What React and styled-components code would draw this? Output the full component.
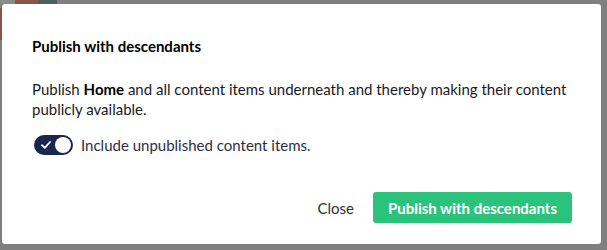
import React, { useState } from "react";
import styled, { createGlobalStyle } from "styled-components";

const GlobalStyle = createGlobalStyle`
  html, body {
    margin: 0;
    padding: 0;
    width: 607px;
    height: 250px;
    overflow: hidden;
    font-family: Lato, "Open Sans", sans-serif;
  }
`;

const Backdrop = styled.div`
  width: 607px;
  height: 250px;
  box-sizing: border-box;
  padding: 4px 6px 6px 2px;
  background:
    linear-gradient(to right, #8a8a8a 0 15px, #8a5548 15px 38px, #4e5f60 38px 57px, transparent 57px) top left / 100% 4px no-repeat,
    linear-gradient(to bottom, transparent 0 8px, #8a5548 8px 40px, transparent 40px) top left / 2px 100% no-repeat,
    #7f7f7f;
`;

const Dialog = styled.div`
  width: 599px;
  height: 240px;
  box-sizing: border-box;
  background: #fff;
  border-radius: 3px;
  padding: 32px 29px 21px 30px;
  display: flex;
  flex-direction: column;
  color: #1a1a1f;
`;

const Title = styled.h2`
  margin: 0;
  font-size: 15px;
  line-height: 20px;
  font-weight: 700;
  color: #000;
`;

const Body = styled.p`
  margin: 23px 0 0;
  font-size: 15px;
  line-height: 20px;
  strong {
    font-weight: 700;
    color: #000;
  }
`;

const ToggleRow = styled.label`
  display: flex;
  align-items: center;
  gap: 8px;
  margin-top: 16px;
  font-size: 15px;
  line-height: 20px;
  color: #2b2f45;
  cursor: pointer;
`;

const Track = styled.span`
  position: relative;
  width: 39px;
  height: 20px;
  border-radius: 10px;
  background: ${(p) => (p.$on ? "#1b264f" : "#d8d7d9")};
  flex-shrink: 0;
  margin-left: 2px;
`;

const Knob = styled.span`
  position: absolute;
  top: 2px;
  left: ${(p) => (p.$on ? "21px" : "2px")};
  width: 16px;
  height: 16px;
  border-radius: 50%;
  background: #fff;
`;

const Check = styled.svg`
  position: absolute;
  left: 7px;
  top: 6px;
`;

const Footer = styled.div`
  margin-top: auto;
  display: flex;
  justify-content: flex-end;
  align-items: center;
  gap: 9px;
`;

const Button = styled.button`
  height: 31px;
  border: none;
  border-radius: 3px;
  font-family: Lato, "Open Sans", sans-serif;
  font-size: 15px;
  padding: 0 ${(p) => (p.$primary ? "15px" : "10px")};
  font-weight: ${(p) => (p.$primary ? 700 : 400)};
  background: ${(p) => (p.$primary ? "#2bc37c" : "transparent")};
  color: ${(p) => (p.$primary ? "#fff" : "#303033")};
  cursor: pointer;
`;

export default function App() {
  const [on, setOn] = useState(true);
  return (
    <>
      <GlobalStyle />
      <Backdrop>
        <Dialog>
          <Title>Publish with descendants</Title>
          <Body>
            Publish <strong>Home</strong> and all content items underneath and
            thereby making their content publicly available.
          </Body>
          <ToggleRow onClick={() => setOn(!on)}>
            <Track $on={on}>
              {on && (
                <Check width="10" height="8" viewBox="0 0 10 8">
                  <path
                    d="M1 4.2 L3.8 6.8 L9 1"
                    fill="none"
                    stroke="#fff"
                    strokeWidth="1.8"
                    strokeLinecap="round"
                    strokeLinejoin="round"
                  />
                </Check>
              )}
              <Knob $on={on} />
            </Track>
            Include unpublished content items.
          </ToggleRow>
          <Footer>
            <Button>Close</Button>
            <Button $primary>Publish with descendants</Button>
          </Footer>
        </Dialog>
      </Backdrop>
    </>
  );
}
